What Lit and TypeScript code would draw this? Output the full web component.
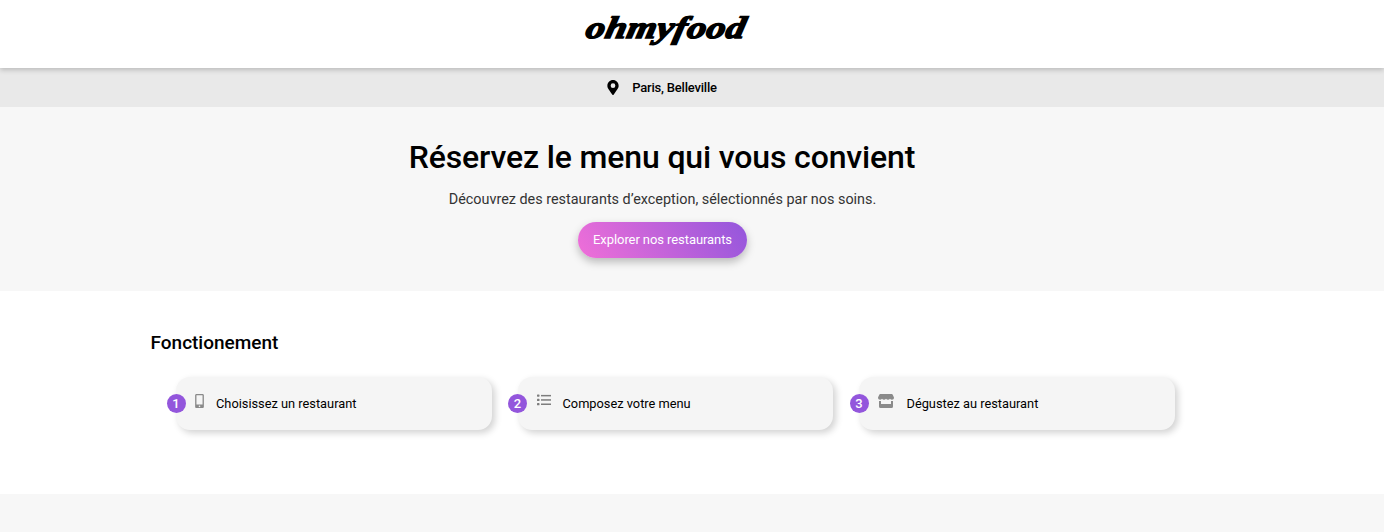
import { LitElement, html, css } from "lit";
import { customElement } from "lit/decorators.js";

const phone = html`<svg class="ic" style="width:9px;height:14px" viewBox="0 0 320 512"><path fill="#8a8a8a" d="M272 0H48C21.5 0 0 21.5 0 48v416c0 26.5 21.5 48 48 48h224c26.5 0 48-21.5 48-48V48c0-26.5-21.5-48-48-48zM160 480c-17.7 0-32-14.3-32-32s14.3-32 32-32 32 14.3 32 32-14.3 32-32 32zm112-108c0 6.600-5.400 12-12 12H60c-6.600 0-12-5.400-12-12V60c0-6.600 5.400-12 12-12h200c6.600 0 12 5.400 12 12v312z"/></svg>`;
const list = html`<svg class="ic" style="width:14px;height:12px" viewBox="0 0 14 12"><g fill="#7d7d7d"><rect x="0" y="0.500" width="2.500" height="2.200" rx=".6"/><rect x="0" y="4.800" width="2.500" height="2.200" rx=".6"/><rect x="0" y="9.100" width="2.500" height="2.200" rx=".6"/><rect x="4" y="0.900" width="10" height="1.500"/><rect x="4" y="5.200" width="10" height="1.500"/><rect x="4" y="9.500" width="10" height="1.500"/></g></svg>`;
const store = html`<svg class="ic" style="width:16px;height:14px" viewBox="0 0 16 14"><g fill="#8a8a8a"><path d="M2.300 0h11.400a1 1 0 0 1 .9.500L16 3.600c0 1.500-1 2.200-2 2.200-.8 0-1.500-.4-2-1-.5.600-1.200 1-2 1s-1.500-.4-2-1c-.5.600-1.200 1-2 1s-1.500-.4-2-1c-.5.600-1.200 1-2 1-1 0-2-.7-2-2.200L1.400.500a1 1 0 0 1 .9-.500z"/><path d="M1 7h2v3h10V7h2v5.500a1.500 1.500 0 0 1-1.500 1.500h-11A1.500 1.500 0 0 1 1 12.500z"/></g></svg>`;

const steps = [
  { n: 1, icon: phone, label: "Choisissez un restaurant", cls: "s1" },
  { n: 2, icon: list, label: "Composez votre menu", cls: "s2" },
  { n: 3, icon: store, label: "Dégustez au restaurant", cls: "s3" },
];

@customElement("app-root")
export class AppRoot extends LitElement {
  static styles = css`
    :host { display: block; font-family: Roboto, "Liberation Sans", sans-serif; color: #000; background: #fff; min-height: 532px; }
    header { height: 68px; background: #fff; box-shadow: 0 2px 5px rgba(0,0,0,.2); position: relative; display: flex; justify-content: center; padding-right: 60px; }
    .logo { font-family: "Liberation Serif", serif; font-style: italic; font-weight: 700; font-size: 31px; line-height: 56px; height: 56px; letter-spacing: .4px; -webkit-text-stroke: 1.500px #000; transform: translateX(4px) skewX(-12deg) scaleX(1.22); }
    .loc { height: 39px; background: #e9e9e9; display: flex; align-items: center; justify-content: center; gap: 13px; padding-right: 60px; font-size: 13px; font-weight: 500; letter-spacing: -.2px; }
    .loc svg { width: 12px; height: 15px; margin-top: -1px; }
    .hero { height: 184px; box-sizing: border-box; background: #f7f7f7; display: flex; flex-direction: column; align-items: center; padding: 30px 60px 0 0; }
    h1 { margin: 0; font-size: 32px; line-height: 40px; font-weight: 500; letter-spacing: -.15px; }
    .hero p { margin: 14px 0 0 1px; font-size: 14.400px; line-height: 17px; color: #333; }
    .btn { margin-top: 14px; width: 169px; height: 36px; box-sizing: border-box; padding: 0 0 2px 1px; border-radius: 18px; color: #fff; font-size: 13px; letter-spacing: -.08px; display: flex; align-items: center; justify-content: center; background: linear-gradient(55deg, #f06fd8, #9356dc); box-shadow: 0 4px 8px rgba(0,0,0,.25); }
    .how { height: 203px; box-sizing: border-box; padding: 40px 0 0 150.500px; background: #fff; }
    h2 { margin: 0; font-size: 19px; line-height: 23px; font-weight: 500; letter-spacing: 0; }
    .cards { display: flex; gap: 26px; margin: 23px 0 0 25.500px; }
    .card { width: 315.500px; height: 53px; box-sizing: border-box; padding-bottom: 1px; position: relative; background: #f5f5f5; border-radius: 14px; box-shadow: 3px 3px 7px rgba(0,0,0,.18); display: flex; align-items: center; font-size: 12.800px; }
    .num { position: absolute; left: -9.500px; top: 17px; width: 19px; height: 19px; border-radius: 50%; background: #9356dc; color: #fff; font-size: 13px; font-weight: 500; display: flex; align-items: center; justify-content: center; }
    .slot { position: absolute; left: 19px; top: 17px; }
    .t { margin-left: 40px; }
    .s2 .t { margin-left: 45px; }
    .s3 .t { margin-left: 47.500px; }
    .ic { display: block; }
    .foot { height: 38px; background: #f7f7f7; }
  `;
  render() {
    return html`
      <header><div class="logo">ohmyfood</div></header>
      <div class="loc">
        <svg viewBox="0 0 384 512"><path fill="#000" d="M172 502C27 291 0 267 0 192 0 86 86 0 192 0s192 86 192 192c0 75-27 99-172 310-10 14-30 14-40 0zm20-230a80 80 0 1 0 0-160 80 80 0 0 0 0 160z"/></svg>
        <span>Paris, Belleville</span>
      </div>
      <section class="hero">
        <h1>Réservez le menu qui vous convient</h1>
        <p>Découvrez des restaurants d’exception, sélectionnés par nos soins.</p>
        <div class="btn">Explorer nos restaurants</div>
      </section>
      <section class="how">
        <h2>Fonctionement</h2>
        <div class="cards">
          ${steps.map(s => html`<div class="card ${s.cls}"><span class="num">${s.n}</span><span class="slot">${s.icon}</span><span class="t">${s.label}</span></div>`)}
        </div>
      </section>
      <div class="foot"></div>
    `;
  }
}
